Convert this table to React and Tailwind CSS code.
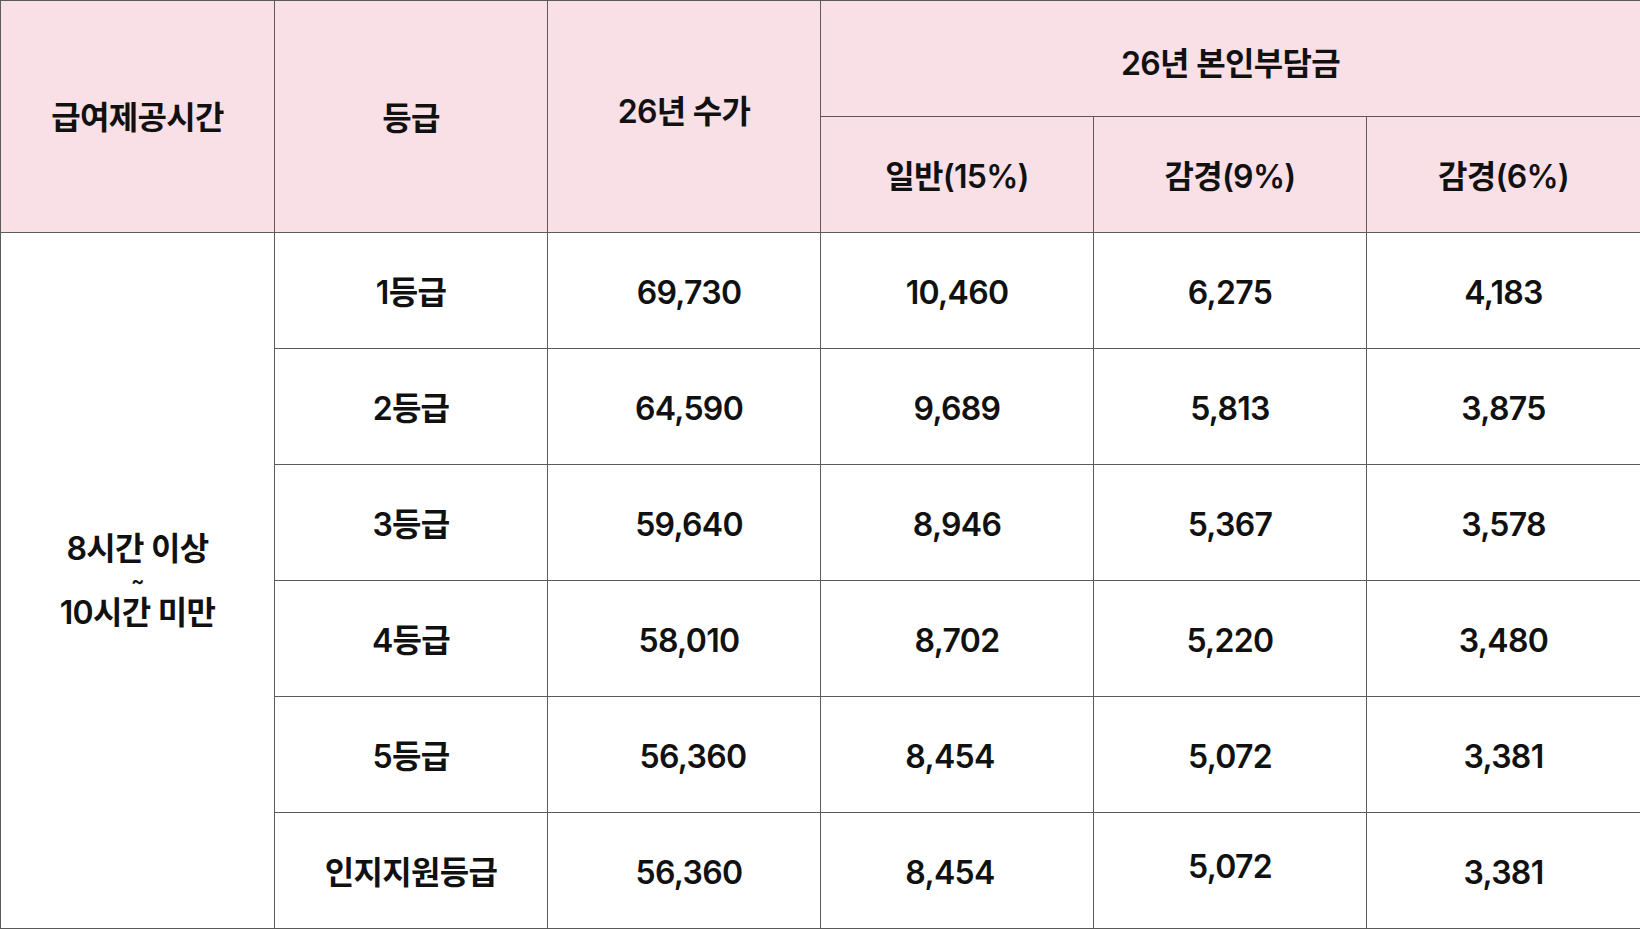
import React from "react";

const rows = [
  { grade: "1등급", fee: "69,730", normal: "10,460", r9: "6,275", r6: "4,183" },
  { grade: "2등급", fee: "64,590", normal: "9,689", r9: "5,813", r6: "3,875" },
  { grade: "3등급", fee: "59,640", normal: "8,946", r9: "5,367", r6: "3,578" },
  { grade: "4등급", fee: "58,010", normal: "8,702", r9: "5,220", r6: "3,480" },
  { grade: "5등급", fee: "56,360", normal: "8,454", r9: "5,072", r6: "3,381" },
  { grade: "인지지원등급", fee: "56,360", normal: "8,454", r9: "5,072", r6: "3,381" },
];

const cell = "border border-[#5a5a5a] text-center align-middle p-0";
const head = "bg-[#f9dfe6] font-semibold " + cell;

export default function App() {
  return (
    <div className="w-[1640px] bg-white text-[#111] font-['Inter','Noto_Sans_CJK_KR',sans-serif] font-semibold text-[32px] tracking-[-0.7px]">
      <table className="w-full table-fixed border-collapse">
        <colgroup>
          <col className="w-[274px]" />
          <col className="w-[273px]" />
          <col className="w-[273px]" />
          <col className="w-[273px]" />
          <col className="w-[273px]" />
          <col className="w-[274px]" />
        </colgroup>
        <thead>
          <tr className="h-[116px]">
            <th rowSpan={2} className={head + " pt-[2px]"}>
              급여제공시간
            </th>
            <th rowSpan={2} className={head + " pt-[4px]"}>
              등급
            </th>
            <th rowSpan={2} className={head + " pb-[10px]"}>
              26년 수가
            </th>
            <th colSpan={3} className={head + " pt-[10px]"}>
              26년 본인부담금
            </th>
          </tr>
          <tr className="h-[116px]">
            <th className={head + " pt-[4px]"}>일반(15%)</th>
            <th className={head + " pt-[4px]"}>감경(9%)</th>
            <th className={head + " pt-[4px]"}>감경(6%)</th>
          </tr>
        </thead>
        <tbody>
          {rows.map((r, i) => (
            <tr key={i} className="h-[116px]">
              {i === 0 && (
                <td rowSpan={6} className={cell}>
                  <div className="flex flex-col items-center">
                    <div className="leading-[38px]">8시간 이상</div>
                    <div className="text-[20px] leading-[26px]">~</div>
                    <div className="leading-[38px]">10시간 미만</div>
                  </div>
                </td>
              )}
              <td className={cell + " pt-[4px]"}>{r.grade}</td>
              <td className={cell + " pt-[4px]" + (i === 4 ? " pl-[18px]" : " pl-[10px]")}>{r.fee}</td>
              <td className={cell + " pt-[4px]" + (i >= 4 ? " pr-[14px]" : "")}>{r.normal}</td>
              <td className={cell + (i === 5 ? " pb-[8px]" : " pt-[4px]")}>{r.r9}</td>
              <td className={cell + " pt-[4px]"}>{r.r6}</td>
            </tr>
          ))}
        </tbody>
      </table>
    </div>
  );
}
